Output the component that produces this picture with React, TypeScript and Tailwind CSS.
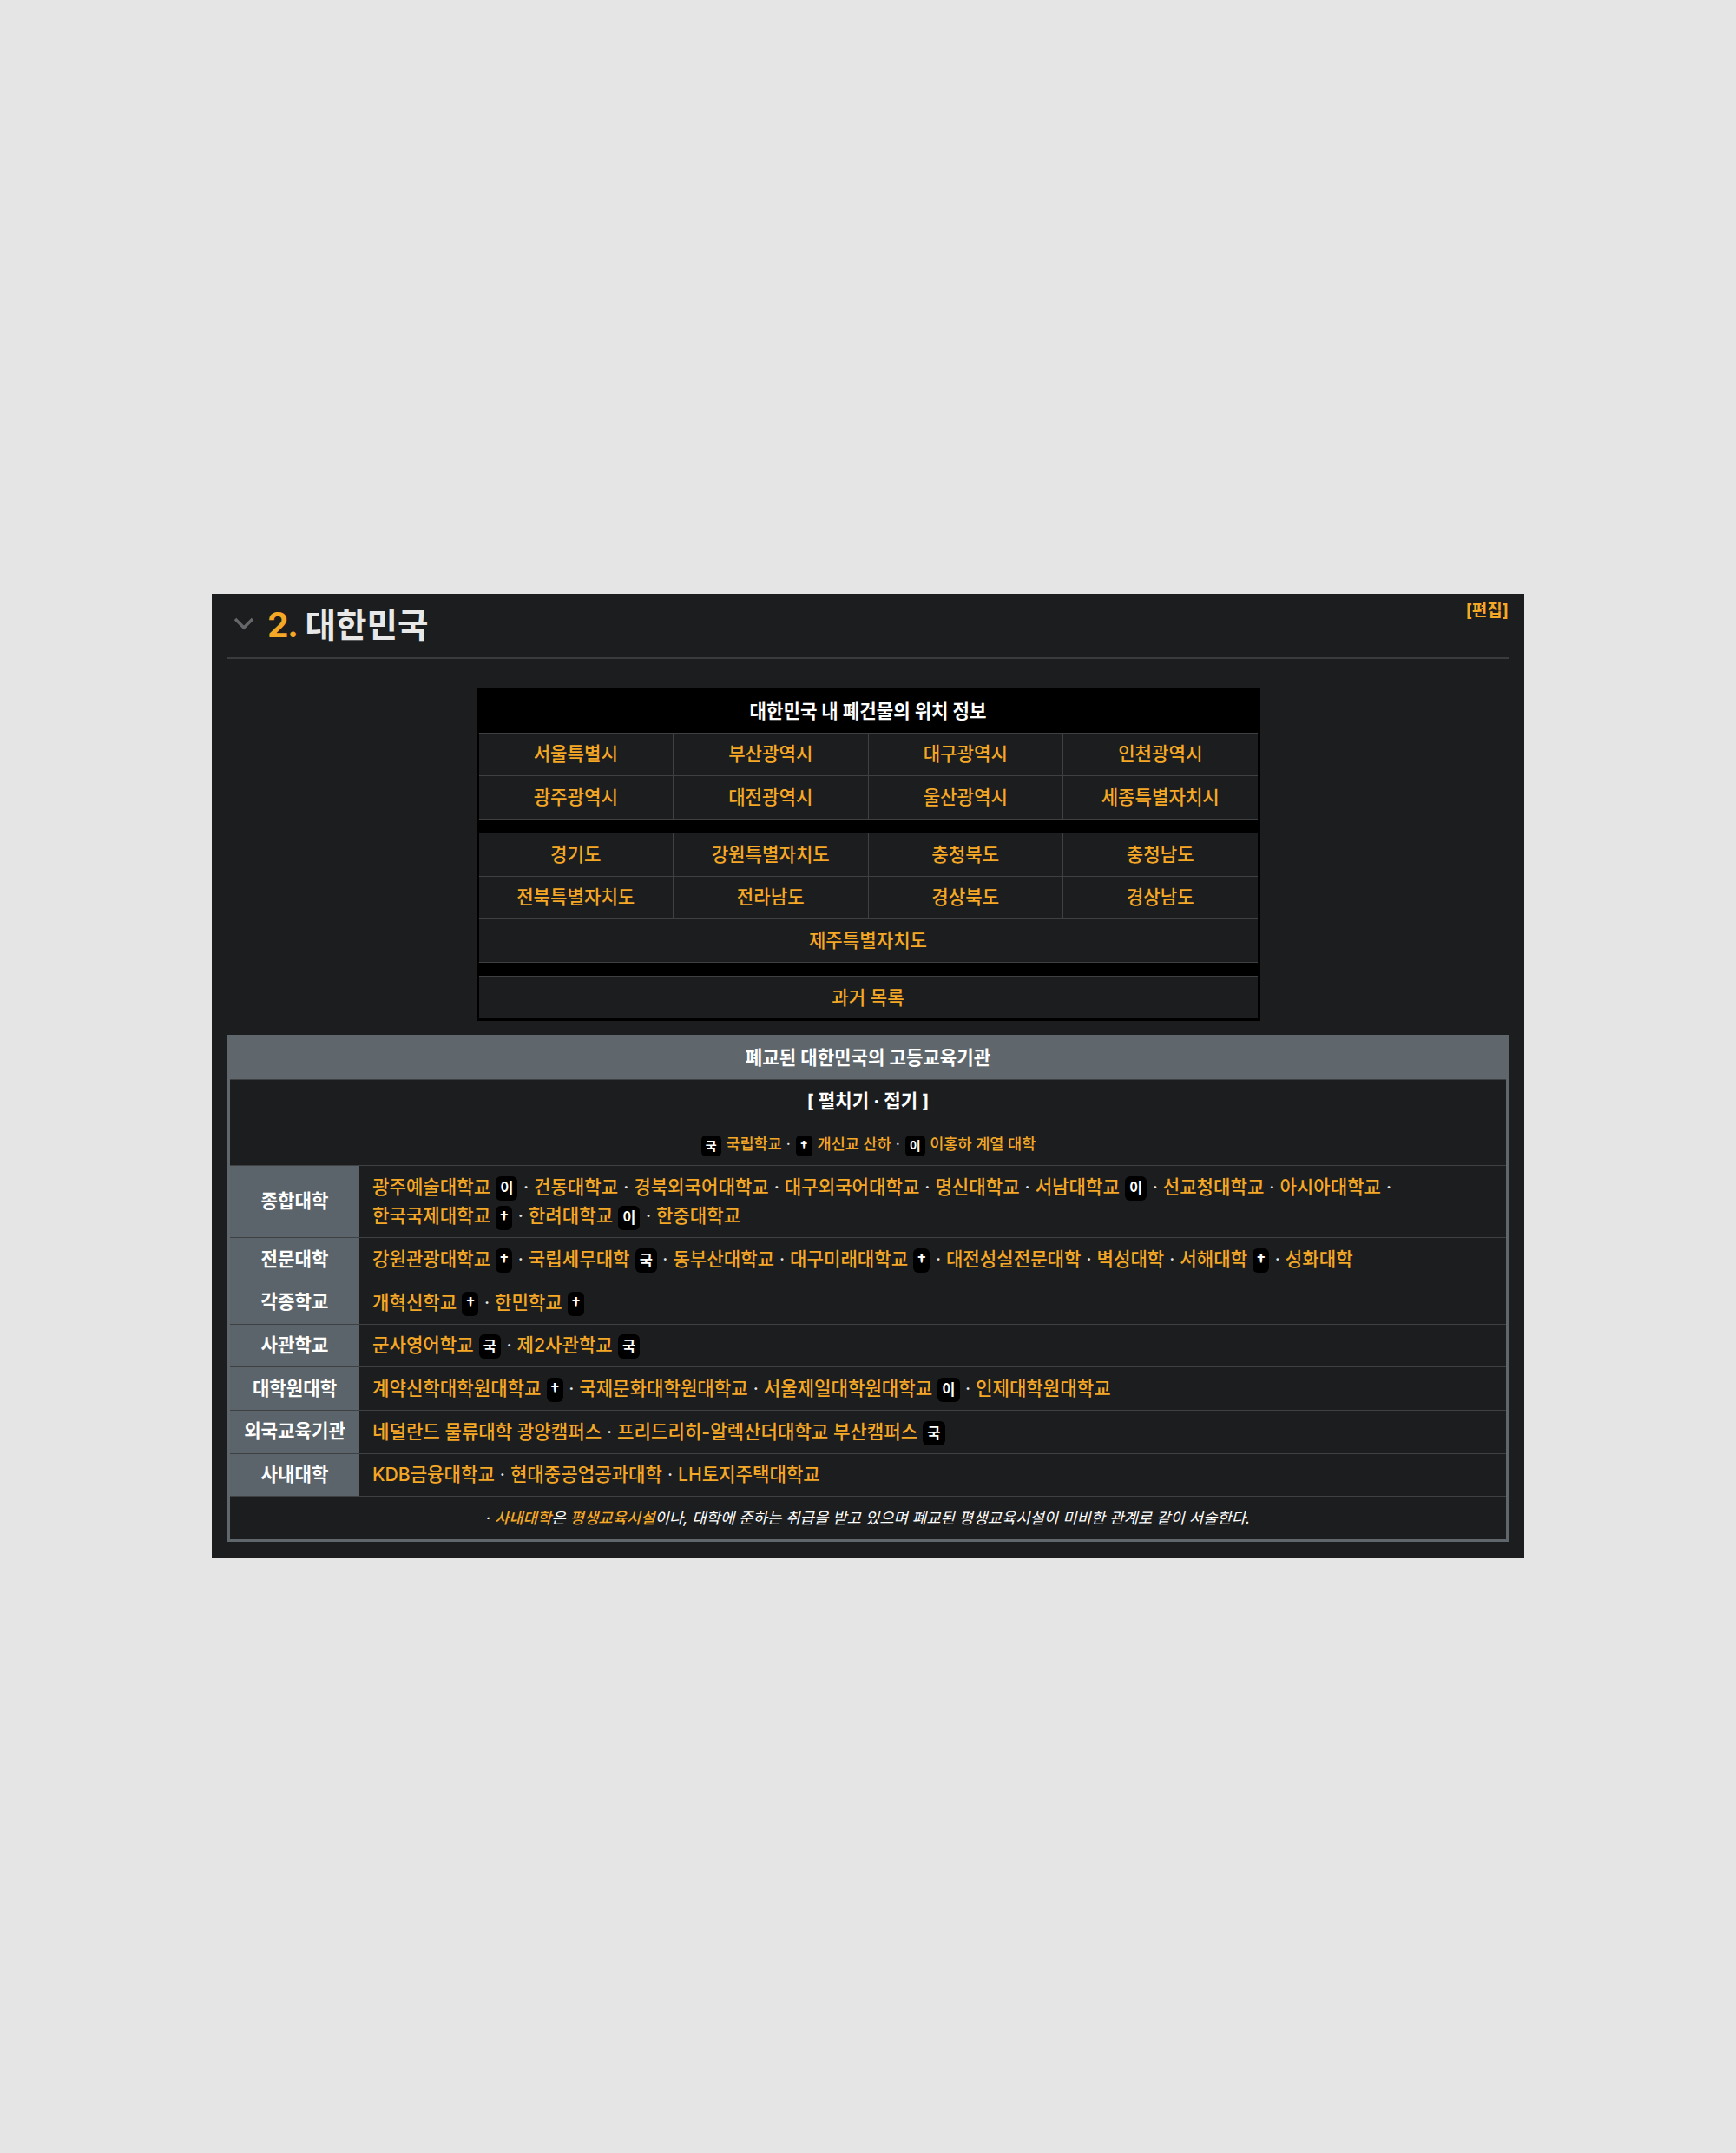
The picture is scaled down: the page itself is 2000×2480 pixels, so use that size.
import React from 'react';

const FONT = "font-['Inter','Noto_Sans_CJK_KR',sans-serif]";
const ORANGE = 'text-[#f5a825] font-medium';

type Item = { name: string; mark?: string };

const parse = (s: string): Item[] =>
  s.split(' · ').map((part) => {
    const m = part.match(/^(.*) ([국이†])$/);
    return m ? { name: m[1], mark: m[2] } : { name: part };
  });

const rows: { label: string; items: string }[] = [
  {
    label: '종합대학',
    items:
      '광주예술대학교 이 · 건동대학교 · 경북외국어대학교 · 대구외국어대학교 · 명신대학교 · 서남대학교 이 · 선교청대학교 · 아시아대학교 · 한국국제대학교 † · 한려대학교 이 · 한중대학교',
  },
  {
    label: '전문대학',
    items:
      '강원관광대학교 † · 국립세무대학 국 · 동부산대학교 · 대구미래대학교 † · 대전성실전문대학 · 벽성대학 · 서해대학 † · 성화대학',
  },
  { label: '각종학교', items: '개혁신학교 † · 한민학교 †' },
  { label: '사관학교', items: '군사영어학교 국 · 제2사관학교 국' },
  {
    label: '대학원대학',
    items: '계약신학대학원대학교 † · 국제문화대학원대학교 · 서울제일대학원대학교 이 · 인제대학원대학교',
  },
  {
    label: '외국교육기관',
    items: '네덜란드 물류대학 광양캠퍼스 · 프리드리히-알렉산더대학교 부산캠퍼스 국',
  },
  { label: '사내대학', items: 'KDB금융대학교 · 현대중공업공과대학 · LH토지주택대학교' },
];

const Badge = ({ mark, small }: { mark: string; small?: boolean }) => {
  const cross = mark === '†';
  return (
    <span
      className={
        small
          ? `mx-[1px] inline-block h-[24px] rounded-[5px] bg-black px-[5px] align-middle leading-[24px] font-bold text-white ${
              cross ? 'text-[16px]' : 'text-[14px]'
            }`
          : `mx-[0.5px] inline-block h-[28px] rounded-[6px] bg-black align-middle leading-[28px] font-bold text-white ${
              cross ? 'px-[4px] text-[19px]' : 'px-[5px] text-[16.5px]'
            }`
      }
    >
      {mark}
    </span>
  );
};

const Dot = () => <span className="font-normal text-[#e8e8e8]"> · </span>;

const CityCell = ({ name, last }: { name: string; last?: boolean }) => (
  <div
    className={`flex-1 py-[7.67px] text-center leading-[33.33px] ${ORANGE} ${
      last ? '' : 'border-r border-[#3f4042]'
    }`}
  >
    {name}
  </div>
);

const CityRow = ({ names }: { names: string[] }) => (
  <div className="flex border-b border-[#3f4042] bg-[#1c1d1f]">
    {names.map((n, i) => (
      <CityCell key={n} name={n} last={i === names.length - 1} />
    ))}
  </div>
);

const Spacer = () => <div className="h-[16px] border-b border-[#3f4042] bg-black" />;

export default function App() {
  return (
    <div className={`h-[2480px] bg-[#e5e5e5] pt-[684px] pl-[244px] ${FONT} text-[21.15px]`}>
      <div className="h-[1111px] w-[1512px] bg-[#1c1d1f] px-[18px]">
        <div className="flex h-[75px] items-start justify-between border-b-2 border-[#3a3b3d]">
          <div className="flex items-center pt-[11px]">
            <svg width="24" height="16" viewBox="0 0 24 16" className="-mt-[3px] ml-[7px]">
              <path d="M2 2l10 10 10-10" fill="none" stroke="#66676a" strokeWidth="3.5" />
            </svg>
            <span className="ml-[15px] text-[39px] leading-[50px] font-bold tracking-[-1.5px] text-[#f5a825]">2.</span>
            <span className="ml-[9px] text-[38.6px] leading-[50px] font-semibold text-[#e8e8e8]">대한민국</span>
          </div>
          <span className="pt-[6px] text-[19px] leading-[28px] font-bold text-[#f5a825]">[편집]</span>
        </div>

        <div className="mx-auto mt-[33px] w-[903px] border-[3px] border-black">
          <div className="border-b border-[#3f4042] bg-black py-[7.67px] text-center leading-[33.33px] font-bold text-white">
            대한민국 내 폐건물의 위치 정보
          </div>
          <CityRow names={['서울특별시', '부산광역시', '대구광역시', '인천광역시']} />
          <CityRow names={['광주광역시', '대전광역시', '울산광역시', '세종특별자치시']} />
          <Spacer />
          <CityRow names={['경기도', '강원특별자치도', '충청북도', '충청남도']} />
          <CityRow names={['전북특별자치도', '전라남도', '경상북도', '경상남도']} />
          <CityRow names={['제주특별자치도']} />
          <Spacer />
          <div className={`bg-[#1c1d1f] py-[7.67px] text-center leading-[33.33px] ${ORANGE}`}>과거 목록</div>
        </div>

        <div className="mt-[15.6px] border-[3px] border-[#5f676c]">
          <div className="border-b border-[#3f4042] bg-[#5f676c] pt-[7px] pb-[7.67px] text-center leading-[33.33px] font-bold text-white">
            폐교된 대한민국의 고등교육기관
          </div>
          <div className="border-b border-[#3f4042] py-[7.67px] text-center leading-[33.33px] font-bold text-white">
            [ 펼치기 · 접기 ]
          </div>
          <div className={`border-b border-[#3f4042] py-[7.67px] text-center text-[17.5px] leading-[33.33px] ${ORANGE}`}>
            <Badge mark="국" small /> 국립학교<Dot /><Badge mark="†" small /> 개신교 산하<Dot />
            <Badge mark="이" small /> 이홍하 계열 대학
          </div>
          {rows.map((r) => (
            <div key={r.label} className="flex border-b border-[#3f4042]">
              <div className="flex w-[149px] shrink-0 items-center justify-center bg-[#5a646a] font-bold text-white">
                {r.label}
              </div>
              <div className={`flex-1 px-[15px] py-[7.67px] leading-[33.33px] ${ORANGE}`}>
                {parse(r.items).map((it, i, all) => (
                  <React.Fragment key={it.name}>
                    <span className="whitespace-nowrap">
                      {it.name}
                      {it.mark && (
                        <>
                          {' '}
                          <Badge mark={it.mark} />
                        </>
                      )}
                    </span>
                    {i < all.length - 1 && <Dot />}
                  </React.Fragment>
                ))}
              </div>
            </div>
          ))}
          <div className="py-[7.67px] text-center text-[17.75px] leading-[33.33px] text-white italic">
            · <span className={ORANGE}>사내대학</span>은 <span className={ORANGE}>평생교육시설</span>이나, 대학에 준하는
            취급을 받고 있으며 폐교된 평생교육시설이 미비한 관계로 같이 서술한다.
          </div>
        </div>
      </div>
    </div>
  );
}
